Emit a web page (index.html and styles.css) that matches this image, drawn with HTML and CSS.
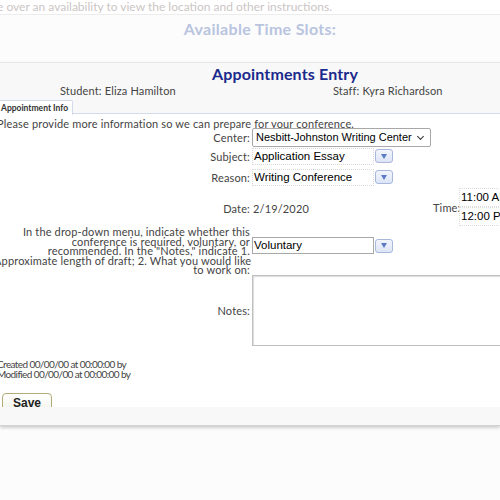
FILE: index.html
```html
<!DOCTYPE html>
<html>
<head>
<meta charset="utf-8">
<link rel="stylesheet" href="styles.css">
</head>
<body>
<div class="page">
  <div class="hint">e over an availability to view the location and other instructions.</div>
  <div class="slots">
    <div class="slots-title">Available Time Slots:</div>
  </div>
  <div class="panel">
    <div class="panel-head">
      <div class="panel-title">Appointments Entry</div>
      <div class="people">
        <span class="student">Student: Eliza Hamilton</span>
        <span class="staff">Staff: Kyra Richardson</span>
      </div>
      <div class="tabs"><span class="tab">Appointment Info</span></div>
    </div>
    <div class="panel-body">
      <div class="intro">Please provide more information so we can prepare for your conference.</div>
      <div class="form">
        <div class="lbl r-center">Center:</div>
        <div class="val r-center"><div class="select">Nesbitt-Johnston Writing Center<span class="chev"></span></div></div>

        <div class="lbl r-subj">Subject:</div>
        <div class="val r-subj"><div class="combo"><span class="field">Application Essay</span><span class="dd"><span class="tri"></span></span></div></div>

        <div class="lbl r-reason">Reason:</div>
        <div class="val r-reason"><div class="combo"><span class="field">Writing Conference</span><span class="dd"><span class="tri"></span></span></div></div>

        <div class="lbl r-date">Date:</div>
        <div class="val r-date">
          <span class="date">2/19/2020</span>
          <span class="time-lbl">Time:</span>
          <span class="times"><span class="time">11:00 AM</span><span class="time">12:00 PM</span></span>
        </div>

        <div class="lbl r-long">In the drop-down menu, indicate whether this<br>conference is required, voluntary, or<br>recommended. In the "Notes," indicate 1.<br>Approximate length of draft; 2. What you would like<br>to work on:</div>
        <div class="val r-long"><div class="combo"><span class="field boxed">Voluntary</span><span class="dd"><span class="tri"></span></span></div></div>

        <div class="lbl r-notes">Notes:</div>
        <div class="val r-notes"><div class="textarea"></div></div>
      </div>
      <div class="meta">
        <div>Created 00/00/00 at 00:00:00 by</div>
        <div>Modified 00/00/00 at 00:00:00 by</div>
      </div>
      <div class="actions"><span class="save">Save</span></div>
    </div>
    <div class="panel-foot"></div>
  </div>
</div>
</body>
</html>
```
FILE: styles.css
```css
html, body {
  margin: 0;
  padding: 0;
  background: #fcfcfc;
  overflow: hidden;
}
.page {
  width: 500px;
  height: 500px;
  font-family: "Lato", "Liberation Sans", sans-serif;
  font-size: 11px;
  letter-spacing: 0.15px;
  color: #444;
  overflow: hidden;
}
.hint {
  height: 14px;
  line-height: 14px;
  font-size: 12px;
  letter-spacing: 0;
  color: #cbc5c5;
  background: #ffffff;
  margin-left: -3px;
  border-bottom: 1px solid #ececec;
  white-space: nowrap;
}
.slots {
  height: 46px;
  background: #fcfcfc;
  padding-left: 20px;
}
.slots-title {
  text-align: center;
  font-size: 16px;
  font-weight: bold;
  letter-spacing: 0.3px;
  color: #b9c4df;
  padding-top: 4px;
}
.panel {
  border-top: 1px solid #e6e6e6;
  background: #fff;
  margin-top: 1px;
  box-shadow: 0 2px 3px rgba(0,0,0,0.18);
}
.panel-head {
  background: #f8f8f8;
  height: 50px;
  border-bottom: 1px solid #d3dbea;
}
.panel-title {
  text-align: center;
  padding-left: 70px;
  font-size: 16px;
  font-weight: bold;
  color: #1b2a8c;
  height: 20px;
  line-height: 20px;
  padding-top: 1px;
}
.people {
  display: flex;
  height: 14px;
  line-height: 14px;
}
.student { margin-left: 60px; width: 273px; }
.tabs {
  display: flex;
  margin-top: 1px;
}
.tab {
  margin-left: -3px;
  height: 14px;
  line-height: 14px;
  padding: 0 4px 0 3px;
  font-size: 8.5px;
  letter-spacing: 0;
  font-weight: bold;
  color: #333;
  background: #fff;
  border: 1px solid #d3dbea;
  border-bottom: none;
  border-radius: 2px 2px 0 0;
  position: relative;
  top: 1px;
}
.panel-body {
  height: 293px;
}
.intro {
  margin-left: -3px;
  line-height: 11px;
  padding-top: 4px;
  white-space: nowrap;
}
.form {
  display: grid;
  grid-template-columns: 250px 1fr;
  column-gap: 2px;
  margin-top: -1px;
}
.lbl {
  text-align: right;
  display: flex;
  align-items: center;
  justify-content: flex-end;
}
.val {
  display: flex;
  align-items: center;
}
.r-center { height: 19px; }
.val.r-center { align-items: flex-start; }
.r-subj { height: 16px; margin-top: 1px; }
.r-reason { height: 16px; margin-top: 5px; }
.r-date { height: 36px; margin-top: 5px; }
.r-long { margin-top: 1px; }
.r-notes { margin-top: 0; height: 72px; }

.select {
  width: 174px;
  height: 17px;
  border: 1px solid #a8a8a8;
  border-radius: 2px;
  background: #fff;
  font-family: "Liberation Sans", sans-serif;
  font-size: 11px;
  letter-spacing: 0;
  color: #000;
  line-height: 17px;
  padding-left: 3px;
  position: relative;
  white-space: nowrap;
}
.chev {
  position: absolute;
  right: 7px;
  top: 5px;
  width: 4px;
  height: 4px;
  border-right: 1.3px solid #333;
  border-bottom: 1.3px solid #333;
  transform: rotate(45deg);
}
.combo {
  display: flex;
  align-items: center;
}
.field {
  width: 119px;
  height: 15px;
  line-height: 15px;
  border: 1px dotted #d8d8d8;
  font-family: "Liberation Sans", sans-serif;
  font-size: 11.5px;
  letter-spacing: 0;
  color: #000;
  padding-left: 1px;
  white-space: nowrap;
  overflow: hidden;
}
.field.boxed {
  border: 1px solid #a8a8a8;
  background: #fff;
}
.dd {
  margin-left: 1px;
  width: 16px;
  height: 12px;
  border: 1px solid #a9b7dc;
  border-radius: 3px;
  background: linear-gradient(#f2f5fc, #dde5f6);
  display: flex;
  align-items: center;
  justify-content: center;
}
.tri {
  width: 0;
  height: 0;
  border-left: 3px solid transparent;
  border-right: 3px solid transparent;
  border-top: 5px solid #5b7bc4;
}
.date {
  width: 180px;
  padding-left: 1px;
}
.time-lbl {
  width: 26px;
  margin-top: -2px;
}
.times {
  display: flex;
  flex-direction: column;
  margin-top: -2px;
}
.time {
  height: 17px;
  line-height: 17px;
  border: 1px dotted #dcdcdc;
  border-right: none;
  font-family: "Liberation Sans", sans-serif;
  font-size: 11.5px;
  letter-spacing: 0;
  color: #000;
  padding-left: 1px;
  white-space: nowrap;
  width: 60px;
}
.lbl.r-long {
  display: block;
  line-height: 9.6px;
  margin-left: -6px;
  white-space: nowrap;
}
.val.r-long { align-items: flex-start; padding-top: 10px; }
.textarea {
  width: 260px;
  height: 69px;
  border: 1px solid #c0c0c0;
  border-right: none;
  box-shadow: inset 1px 1px 1px #ddd;
  background: #fff;
}
.meta {
  margin-top: 12px;
  margin-left: -3px;
  font-size: 10px;
  letter-spacing: -0.6px;
  line-height: 10px;
}
.actions {
  margin-top: 14px;
  padding-left: 2px;
}
.save {
  display: inline-block;
  width: 50px;
  height: 20px;
  line-height: 18px;
  text-align: center;
  border: 1px solid #b3ab78;
  border-radius: 4px;
  background: linear-gradient(#fff, #f2f2ea);
  font-family: "Liberation Sans", sans-serif;
  font-weight: bold;
  font-size: 12px;
  letter-spacing: 0;
  color: #222;
  box-sizing: border-box;
}
.panel-foot {
  height: 18px;
  background: #f8f8f8;
  border-bottom: 1px solid #d2d2d2;
  position: relative;
}
```
